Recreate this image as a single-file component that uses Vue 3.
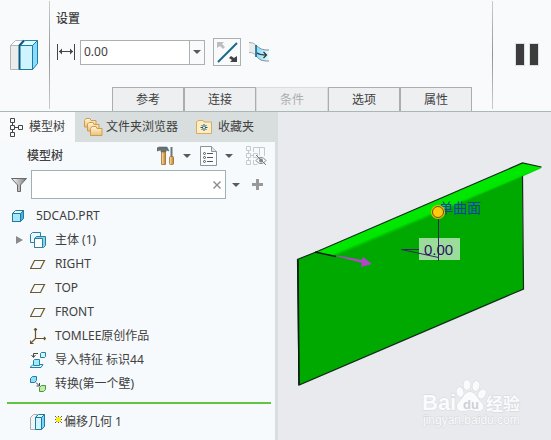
<script setup>
import { ref } from 'vue'

const offset = ref('0.00')
const filter = ref('')
const sections = [
  { label: '参考' },
  { label: '连接' },
  { label: '条件', disabled: true },
  { label: '选项' },
  { label: '属性' },
]
const items = [
  { icon: 'body', label: '主体 (1)', expandable: true },
  { icon: 'plane', label: 'RIGHT' },
  { icon: 'plane', label: 'TOP' },
  { icon: 'plane', label: 'FRONT' },
  { icon: 'csys', label: 'TOMLEE原创作品' },
  { icon: 'import', label: '导入特征 标识44' },
  { icon: 'convert', label: '转换(第一个壁)' },
]
</script>

<template>
  <div class="app">
    <header class="ribbon">
      <div class="feature">
        <svg width="30" height="32" viewBox="0 0 30 32">
          <path d="M1.500 6.500h9v24h-9z" fill="#ececec" stroke="#b5b5b5" />
          <path d="M1.500 6.500L6.500 1.500h9l-5 5z" fill="#fff" stroke="#b5b5b5" />
          <path d="M10.500 6.500L15.500 1.500h13l-5 5z" fill="#e4fbff" stroke="#2587ad" />
          <path d="M23.500 6.500l5-5v23l-5 6z" fill="#8adcff" stroke="#1c7aa3" />
          <path d="M10.500 6.500h13v24h-13z" fill="#cef5ff" stroke="#1c7aa3" />
          <path d="M15 1.500L10.500 6.500v24" fill="none" stroke="#075b83" stroke-width="2" />
        </svg>
      </div>
      <div class="settings">
        <h2 class="heading">设置</h2>
        <div class="controls">
          <svg class="width-icon" width="20" height="18" viewBox="0 0 20 18" stroke="#454545" fill="#454545">
            <path d="M1.500 1v16M18.500 1v16M3 8.500h14" fill="none" />
            <path d="M3 8.500l3-3v6zM17 8.500l-3-3v6z" stroke="none" />
          </svg>
          <div class="combo">
            <input v-model="offset" aria-label="偏移值" />
            <button class="combo-arrow" aria-label="偏移值列表"><i class="caret"></i></button>
          </div>
          <button class="flip" aria-label="反向">
            <svg width="26" height="26" viewBox="0 0 26 26">
              <path d="M4 23L23 4" stroke="#17688d" stroke-width="2" />
              <path d="M3 3h7L8 5l3 3-2 2-3-3-3 2z" fill="#bdbdbd" />
              <path d="M23 23h-7l2-2-3-2 2-2 3 2 3-2z" fill="#424242" />
            </svg>
          </button>
          <button class="plain surface" aria-label="曲面">
            <svg width="22" height="22" viewBox="0 0 22 22">
              <defs>
                <linearGradient id="sheet"><stop offset="0" stop-color="#82dafb" /><stop offset="1" stop-color="#e2faff" /></linearGradient>
              </defs>
              <path d="M1 1c4 0 5 1 8 4v10c-3-4-4-4-8-4z" fill="#ebebeb" />
              <path d="M1 1.500c4 0 5 1 7 3M1 11.500c4 0 5 1 7 3" fill="none" stroke="#aaa" />
              <path d="M8 4c4 4 6 5 13 5v11c-8 0-9-1-13-5z" fill="url(#sheet)" />
              <path d="M8 4c4 4 6 5 13 5M8 15c4 4 5 5 13 5" fill="none" stroke="#808d93" />
              <path d="M8 4v12" stroke="#086187" stroke-width="1.500" />
              <path d="M9 12c3 2 5 2 9 2M15.500 11l3 3-3 3" fill="none" stroke="#333" stroke-width="1.200" />
            </svg>
          </button>
        </div>
        <nav class="sections">
          <button v-for="s in sections" :key="s.label" :disabled="s.disabled">{{ s.label }}</button>
        </nav>
      </div>
      <div class="playback">
        <button class="plain pause" aria-label="暂停"><i></i><i></i></button>
      </div>
    </header>

    <main class="workspace">
      <aside class="sidebar">
        <nav class="tabs" role="tablist">
          <button role="tab" aria-selected="true" class="active">
            <svg width="14" height="20" viewBox="0 0 14 20" fill="none" stroke="#454545">
              <path d="M1.500 1.500h4v4h-4zM1.500 8.500h4v4h-4zM1.500 15.500h4v4h-4zM9.500 8.500h4v4h-4zM3.500 5.500v3M3.500 12.500v3M5.500 10.500h4" />
            </svg>
            <span>模型树</span>
          </button>
          <button role="tab" aria-selected="false" class="folders">
            <svg width="20" height="20" viewBox="0 0 20 20">
              <defs>
                <linearGradient id="folder" x2="0" y2="1"><stop offset="0" stop-color="#fff7da" /><stop offset="1" stop-color="#eac173" /></linearGradient>
              </defs>
              <g fill="url(#folder)" stroke="#cd9c50">
                <path d="M1.500 10V3.500L3 1.500h4l1 2h5V10z" />
                <path d="M4.500 14V7L6 5.500h4l1 2h5V14z" />
                <path d="M7.500 18.500v-7L9 9.500h4l1 2h5v7z" />
              </g>
            </svg>
            <span>文件夹浏览器</span>
          </button>
          <button role="tab" aria-selected="false" class="favorites">
            <svg width="18" height="16" viewBox="0 0 18 16">
              <path d="M1.500 14.500V3L3 1.500h5L9 3h7.500v11.500z" fill="#ffedc2" stroke="#d8aa62" />
              <path d="M9 5v7M5.500 8.500h7M6.500 6l5 5M11.500 6l-5 5" stroke="#175a7a" />
              <circle cx="9" cy="8.500" r="1" fill="#fff" />
            </svg>
            <span>收藏夹</span>
          </button>
        </nav>

        <div class="tree-head">
          <h3>模型树</h3>
          <button class="plain tools" aria-label="设置">
            <svg width="18" height="20" viewBox="0 0 18 20">
              <defs>
                <linearGradient id="handle"><stop offset="0" stop-color="#ffe7b3" /><stop offset="1" stop-color="#b8792c" /></linearGradient>
              </defs>
              <path d="M0 2l2-1h8l2 4-3-1v2H4V4L0 5z" fill="#65727a" stroke="#4a555b" stroke-width=".5" />
              <path d="M4.500 6h4v12.500h-4z" fill="url(#handle)" stroke="#a36b29" stroke-width=".8" />
              <path d="M14.500 1v10" stroke="#6b767c" stroke-width="2" />
              <rect x="12.500" y="10.500" width="4" height="8" rx="1" fill="url(#handle)" stroke="#a36b29" stroke-width=".8" />
            </svg>
            <i class="caret"></i>
          </button>
          <button class="plain columns" aria-label="显示">
            <svg width="17" height="20" viewBox="0 0 17 20">
              <path d="M.5.500h11l5 5v14H.500z" fill="#fbfdff" stroke="#8b9499" />
              <path d="M11.500.500v5h5" fill="#dce5e9" stroke="#8b9499" />
              <path d="M7 7.500h6M7 11.500h6M7 15.500h6" stroke="#555" />
              <g fill="none" stroke="#555"><circle cx="4.500" cy="7.500" r="1" /><circle cx="4.500" cy="11.500" r="1" /><circle cx="4.500" cy="15.500" r="1" /></g>
            </svg>
            <i class="caret"></i>
          </button>
          <button class="plain hide-tree" aria-label="隐藏">
            <svg width="21" height="20" viewBox="0 0 21 20" fill="none" stroke="#c6cacc">
              <path d="M.5.500h4v4h-4zM.5 7.500h4v4h-4zM.5 14.500h4v4h-4zM2.500 4.500v3M2.500 11.500v3M4.500 9.500h3M7.500 7.500h4v4h-4zM7.500 6V1.500h11V10M13.500 1.500v8M7.500 14v4.500h4" />
              <path d="M10 14.500c3-4 7-4 10 0-3 4-7 4-10 0z" stroke="#888" />
              <circle cx="15" cy="14.500" r="2" fill="#888" stroke="none" />
              <path d="M10 9l10 10" stroke="#777" />
            </svg>
          </button>
        </div>

        <div class="search">
          <svg width="16" height="16" viewBox="0 0 16 16">
            <defs>
              <linearGradient id="funnel"><stop offset="0" stop-color="#fff" /><stop offset="1" stop-color="#777" /></linearGradient>
            </defs>
            <path d="M.5 1.500h15L9.500 8v6.500h-3V8z" fill="url(#funnel)" stroke="#686868" />
          </svg>
          <div class="search-box">
            <input v-model="filter" aria-label="搜索模型树" />
            <button class="plain" aria-label="清除">
              <svg width="8" height="8" viewBox="0 0 8 8"><path d="M.5.500l7 7M7.500.500l-7 7" stroke="#8b8b8b" stroke-width="1.400" /></svg>
            </button>
          </div>
          <button class="plain" aria-label="搜索选项"><i class="caret"></i></button>
          <button class="plain add" aria-label="添加">
            <svg width="11" height="11" viewBox="0 0 11 11"><path d="M5.500 0v11M0 5.500h11" stroke="#989898" stroke-width="3" /></svg>
          </button>
        </div>

        <div class="tree">
          <div class="row root">
            <svg width="14" height="14" viewBox="0 0 14 14" stroke="#24799d">
              <path d="M1.500 4.500l3-3h8l-3 3z" fill="#e6fbff" />
              <path d="M9.500 4.500l3-3v8l-3 3z" fill="#44b5df" />
              <rect x="1.500" y="4.500" width="8" height="8" fill="#a6e9fc" />
            </svg>
            <span>5DCAD.PRT</span>
          </div>
          <ul>
            <li v-for="item in items" :key="item.label" class="row">
              <span class="twist">
                <button v-if="item.expandable" class="plain" aria-label="展开">
                  <svg width="8" height="8" viewBox="0 0 8 8"><path d="M1 0l7 4-7 4z" fill="#8b8b8b" /></svg>
                </button>
              </span>
              <svg width="16" height="16" viewBox="0 0 16 16">
                <g v-if="item.icon === 'body'" stroke="#317f9d">
                  <path d="M.5 2.500l2-2h8v8l-2 2h-8z" fill="#e6faff" />
                  <path d="M4.500 6.500l2-2h9v9l-2 2h-9z" fill="#7ad9f7" />
                  <path d="M4.500 6.500h8v9h-8z" fill="#fff" />
                </g>
                <path v-else-if="item.icon === 'plane'" d="M4.500 4.500h10l-4 8H.500z" fill="none" stroke="#6f592e" stroke-width="1.200" />
                <g v-else-if="item.icon === 'csys'" fill="none" stroke="#6f5323" stroke-width="1.200">
                  <path d="M5.500 0v10.500h10M5.500 10.500L.500 15.500M4 2l1.500-1.500L7 2M14 9l1.500 1.500L14 12M.500 12.500v3h3" />
                </g>
                <g v-else-if="item.icon === 'import'">
                  <path d="M0 15.500l3-3h10l-2 3z" fill="#d4f8ff" stroke="#25819f" />
                  <path d="M3.500 8.500l1-1h5v6h-6z" fill="#9eeaff" stroke="#25819f" />
                  <path d="M10.500 1.500l1-1h4v4l-1 1h-4z" fill="#cff6ff" stroke="#25819f" />
                  <path d="M8 1.500H3.500V5M1.500 3l2 2.500 2-2.500" fill="none" stroke="#444" />
                </g>
                <g v-else>
                  <path d="M.5 2.500l2-2h4v4l-2 2h-4z" fill="#8cdfff" stroke="#277f9f" />
                  <path d="M9.500 11.500l2-2h4v4l-2 2h-4z" fill="#bcefa5" stroke="#4c9342" />
                  <path d="M6 6.500l3 3M9.500 7v3h-3" fill="none" stroke="#444" />
                </g>
              </svg>
              <span class="label">{{ item.label }}</span>
            </li>
          </ul>
          <hr />
          <div class="row">
            <span class="twist"></span>
            <svg width="16" height="16" viewBox="0 0 16 16">
              <path d="M.5 3.500l3-3h4l-2 3v12h-5z" fill="#f4f4f4" stroke="#aaa" />
              <path d="M5.500 3.500l3-3h6l-3 3z" fill="#e3fbff" stroke="#1c7aa3" />
              <path d="M11.500 3.500l3-3v12l-3 3z" fill="#75d6f8" stroke="#1c7aa3" />
              <path d="M5.500 3.500h6v12h-6z" fill="#cff6ff" stroke="#1c7aa3" />
            </svg>
            <svg class="spark" width="8" height="8" viewBox="0 0 8 8">
              <path d="M3.500 0v7M0 3.500h7M0 0l7 7M7 0L0 7" stroke="#555" />
              <path d="M3.500 1v5M1 3.500h5M1.500 1.500l4 4M5.500 1.500l-4 4" stroke="#ffee00" stroke-width="1.400" />
            </svg>
            <span>偏移几何 1</span>
          </div>
        </div>
      </aside>

      <section class="viewport">
        <svg class="model" viewBox="278 112 273 328" preserveAspectRatio="xMinYMin meet">
          <defs>
            <linearGradient id="bend" gradientUnits="userSpaceOnUse" x1="419" y1="208" x2="424" y2="220">
              <stop offset="0" stop-color="#00e800" /><stop offset=".7" stop-color="#00e600" /><stop offset=".85" stop-color="#00c200" /><stop offset="1" stop-color="#00aa00" />
            </linearGradient>
          </defs>
          <path d="M297.500 259.500L316 252l206-77 1.500 114-224.500 96z" fill="#00a900" />
          <path d="M316 252L522.500 163l19 4-1 1.500-18 8L337 257z" fill="url(#bend)" />
          <path d="M316 252l-18.500 7.500 1.500 125.500 224.500-96-1-113M316 252L522.500 163l19 4" fill="none" stroke="#102e17" stroke-width="1.200" />
          <path d="M298 260l1 125M315 252l21 4.500" fill="none" stroke="#081b12" stroke-width="1.500" />
          <path d="M336 256l2-.500 24 4.500 1-3 9 7-11 3 1-4z" fill="#b344cc" />
          <text x="439" y="213" class="surface-label">单曲面</text>
          <rect x="419" y="238" width="41" height="22" fill="#9bdc9b" />
          <path d="M438.500 218v43M419 249.500h-17.500l37 8" fill="none" stroke="#352560" />
          <text x="424" y="255" class="dimension">0.00</text>
          <circle cx="438" cy="212" r="7" fill="#f0bd00" />
          <circle cx="438" cy="212" r="5.500" fill="#ffc90c" stroke="#65500a" />
          <g class="watermark">
            <text x="422" y="410" class="brand">Bai</text>
            <path d="M470 392c6 0 7 7 12 11 4 6-1 9-6 8-4-1-8-1-12 0-6 1-9-3-6-8 5-4 6-11 12-11z" />
            <ellipse cx="460" cy="392" rx="3.500" ry="5" transform="rotate(-15 460 392)" />
            <ellipse cx="467" cy="385" rx="3.500" ry="5" />
            <ellipse cx="476" cy="386" rx="3.500" ry="5" transform="rotate(15 476 386)" />
            <ellipse cx="482" cy="394" rx="3.500" ry="5" transform="rotate(30 482 394)" />
            <text x="463" y="409" class="paw-text">du</text>
            <text x="486" y="410" class="experience">经验</text>
            <text x="423" y="424" class="site">jingyan.baidu.com</text>
          </g>
        </svg>
      </section>
    </main>
  </div>
</template>

<style>
body {
  margin: 0;
}
</style>

<style scoped>
* {
  box-sizing: border-box;
}
.app {
  display: flex;
  flex-direction: column;
  min-height: 100vh;
  background: #f8fafc;
  color: #404040;
  font: 12px/16px "Noto Sans", "Noto Sans CJK SC", sans-serif;
}
button,
input {
  margin: 0;
  padding: 0;
  border: 0;
  background: none;
  color: inherit;
  font: inherit;
}
svg {
  display: block;
  flex: none;
}
h2,
h3 {
  margin: 0;
  font-size: 12px;
  font-weight: 500;
}
.plain {
  display: flex;
  align-items: center;
}
.caret {
  display: block;
  border: 4px solid transparent;
  border-top-color: #5a5a5a;
  border-bottom: 0;
}
.ribbon {
  display: flex;
  border-bottom: 1px solid #aab7b8;
}
.feature {
  width: 49px;
  padding: 39px 0 0 9px;
}
.settings {
  position: relative;
  flex: 1;
  display: flex;
  flex-direction: column;
}
.settings::before,
.playback::before {
  content: "";
  position: absolute;
  left: 0;
  top: 1px;
  bottom: 2px;
  width: 1px;
  background: linear-gradient(#c8cccd, #8f9698, #c8cccd);
}
.heading {
  padding: 11px 0 0 7px;
}
.controls {
  display: flex;
  align-items: center;
  height: 28px;
  margin-top: 11px;
  padding-left: 7px;
}
.combo {
  display: flex;
  width: 125px;
  height: 25px;
  margin-left: 4px;
  border: 1px solid #abb0b2;
  background: #fff;
}
.combo input {
  flex: 1;
  min-width: 0;
  padding-left: 3px;
}
.combo-arrow {
  display: flex;
  align-items: center;
  justify-content: center;
  width: 15px;
  border-left: 1px solid #abb0b2;
  background: #f8fafb;
}
.flip {
  width: 28px;
  height: 28px;
  margin-left: 8px;
  border: 1px solid #abb0b2;
}
.surface {
  margin-left: 7px;
}
.sections {
  display: flex;
  margin-top: 21px;
  padding-left: 63px;
}
.sections button {
  width: 72px;
  height: 24px;
  border: 1px solid #abaeb0;
  border-bottom: 0;
  background: #edeff1;
}
.sections button:disabled {
  border-color: #d9dcde;
  color: #acaeb0;
}
.playback {
  position: relative;
  width: 59px;
  padding: 43px 0 0 23px;
}
.pause {
  gap: 4px;
}
.pause i {
  width: 10px;
  height: 23px;
  border: 1px solid #dedfdf;
  background: #3c3c3c;
}
.workspace {
  flex: 1;
  display: flex;
}
.sidebar {
  width: 278px;
  flex: none;
  border-right: 3px solid #d8dede;
  background: #f6fafc;
}
.tabs {
  display: flex;
  height: 30px;
  background: #d8dede;
}
.tabs button {
  display: flex;
  align-items: center;
  gap: 6px;
}
.tabs .active {
  width: 75px;
  padding-left: 9px;
  background: #f8fafc;
}
.tabs .folders {
  gap: 3px;
  padding-left: 8px;
}
.tabs .favorites {
  gap: 5px;
  padding-left: 17px;
}
.tree-head {
  display: flex;
  align-items: center;
  height: 28px;
  padding: 0 8px 0 27px;
}
.tree-head h3 {
  flex: 1;
}
.tools {
  gap: 8px;
}
.columns {
  gap: 8px;
  margin-left: 9px;
}
.hide-tree {
  margin-left: 13px;
}
.search {
  display: flex;
  align-items: center;
  height: 29px;
  padding: 0 12px 0 11px;
}
.search-box {
  display: flex;
  flex: 1;
  height: 29px;
  margin: 0 6px 0 4px;
  padding-right: 4px;
  border: 1px solid #9fb1b2;
  background: #fff;
}
.search-box input {
  flex: 1;
  min-width: 0;
  padding-left: 4px;
}
.add {
  margin-left: 12px;
}
.tree {
  padding-top: 5px;
}
.tree ul {
  margin: 0;
  padding: 0;
  list-style: none;
}
.row {
  display: flex;
  align-items: center;
  height: 24px;
  padding-left: 15px;
}
.root {
  gap: 11px;
  padding-left: 11px;
}
.twist {
  width: 15px;
}
.label {
  margin-left: 9px;
}
.tree hr {
  height: 2px;
  margin: 6px 4px 6px 7px;
  border: 0;
  background: #64c342;
}
.spark {
  margin: 0 1px 4px 9px;
}
.viewport {
  flex: 1;
  min-width: 0;
  background: #e8eaee;
}
.model {
  width: 100%;
}
.surface-label {
  fill: #1341aa;
  font: 14px "Noto Sans CJK SC", sans-serif;
}
.dimension {
  fill: #2c1360;
  font: 15px "Liberation Sans", sans-serif;
}
.watermark {
  fill: #fafbfc;
  stroke: #d5d8da;
  stroke-width: 1px;
  paint-order: stroke;
}
.brand {
  font: bold 22px "Liberation Sans", sans-serif;
}
.paw-text {
  fill: #cdd1d4;
  stroke: none;
  font: bold 13px "Liberation Sans", sans-serif;
}
.experience {
  font: bold 17px "Noto Sans CJK SC", sans-serif;
}
.site {
  font: 12px "Liberation Sans", sans-serif;
}
</style>
